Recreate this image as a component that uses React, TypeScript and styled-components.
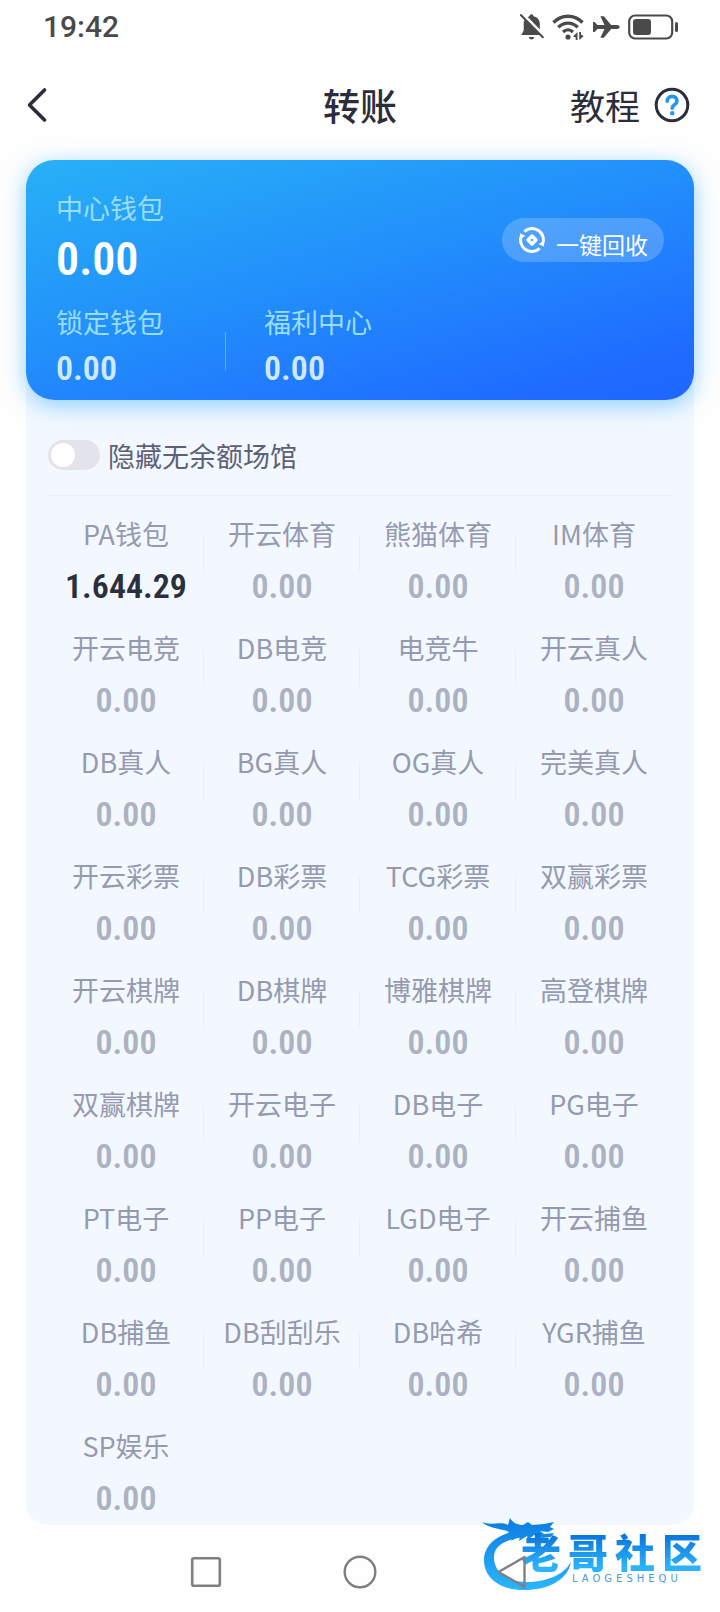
import React, { useState } from "react";
import styled, { createGlobalStyle } from "styled-components";

const GlobalStyle = createGlobalStyle`
  *, *::before, *::after { box-sizing: border-box; }
  body {
    margin: 0;
    background: #fefefe;
    color: #2b2d3a;
    font-family: "Noto Sans CJK SC", sans-serif;
  }
  button { border: 0; padding: 0; background: none; font: inherit; color: inherit; cursor: pointer; }
  ul { list-style: none; margin: 0; padding: 0; }
  svg { display: block; flex: none; }
`;

const numberFont = `"Roboto Condensed", "Liberation Sans Narrow", Roboto, sans-serif`;

const Page = styled.div`
  position: relative;
  min-height: 100vh;
  display: flex;
  flex-direction: column;
`;

const StatusBar = styled.div`
  display: flex;
  align-items: center;
  justify-content: space-between;
  height: 54px;
  padding: 0 41px 0 43px;
  color: #4a4a4a;
`;

const Clock = styled.time`
  font: 500 30px/36px Roboto, sans-serif;
`;

const StatusIcons = styled.div`
  display: flex;
  align-items: center;
  gap: 8px;
`;

const Header = styled.header`
  display: grid;
  grid-template-columns: 1fr auto 1fr;
  align-items: center;
  height: 106px;
  padding: 0 30px 4px;
`;

const Title = styled.h1`
  margin: 0;
  font-size: 37px;
  line-height: 48px;
  font-weight: 500;
`;

const BackButton = styled.button`
  justify-self: start;
  margin-left: -4px;
`;

const HelpLink = styled.a`
  justify-self: end;
  display: flex;
  align-items: center;
  gap: 14px;
  color: inherit;
  text-decoration: none;
  font-size: 35px;
  line-height: 48px;
`;

const Main = styled.main`
  margin: 0 26px;
  border-radius: 28px 28px 22px 22px;
  background: #f2f8fe;
`;

const Card = styled.section`
  display: flex;
  flex-direction: column;
  padding: 30px 30px 12px;
  border-radius: 28px;
  color: #fff;
  background: linear-gradient(164deg, #28b1f6 0%, #2290fb 45%, #1f6bff 88%, #1f66ff 100%);
  box-shadow: 0 5px 22px rgba(40, 165, 255, 0.5);
`;

const CardTop = styled.div`
  display: flex;
  align-items: center;
  justify-content: space-between;
`;

const CardBottom = styled.div`
  display: flex;
  align-items: flex-end;
  gap: 38px;
  margin-top: 14px;
`;

const Wallet = styled.div<{ $wide?: boolean }>`
  min-width: ${(p) => (p.$wide ? "131px" : "0")};
`;

const WalletLabel = styled.div`
  font-size: 27px;
  line-height: 36px;
  color: #9adcfc;
`;

const WalletValue = styled.div<{ $large?: boolean }>`
  margin-top: ${(p) => (p.$large ? "2px" : "8px")};
  font: ${(p) => (p.$large ? "600 46px/62px" : "600 34px/40px")} ${numberFont};
  color: ${(p) => (p.$large ? "#fff" : "#cfe9ff")};
`;

const CardDivider = styled.div`
  width: 1px;
  height: 38px;
  margin-bottom: 18px;
  background: rgba(255, 255, 255, 0.3);
`;

const RecycleButton = styled.button`
  display: flex;
  align-items: center;
  gap: 10px;
  height: 44px;
  padding: 0 16px;
  border-radius: 22px;
  background: rgba(255, 255, 255, 0.2);
  font-size: 23px;
`;

const RecycleText = styled.span`
  padding-top: 8px;
  line-height: 32px;
`;

const Venues = styled.section`
  padding: 15px 22px 3px;
`;

const FilterRow = styled.label`
  display: flex;
  align-items: center;
  gap: 8px;
  height: 81px;
  border-bottom: 1px solid #ebeff5;
  font-size: 27px;
  color: #5d6077;
`;

const Switch = styled.input`
  appearance: none;
  width: 52px;
  height: 30px;
  margin: 0;
  padding: 3px;
  border-radius: 15px;
  background: #e3e4eb;

  &::before {
    content: "";
    display: block;
    width: 24px;
    height: 24px;
    border-radius: 50%;
    background: #fff;
  }

  &:checked {
    background: #2290fb;
  }

  &:checked::before {
    margin-left: auto;
  }
`;

const VenueGrid = styled.ul`
  display: grid;
  grid-template-columns: repeat(4, 1fr);
`;

const Venue = styled.li<{ $divided: boolean }>`
  padding: 20px 0 4px;
  text-align: center;
  background: ${(p) =>
    p.$divided ? "linear-gradient(#eceef9, #eceef9) right 39px / 1px 37px no-repeat" : "none"};
`;

const VenueName = styled.div`
  font-size: 27px;
  line-height: 36px;
  white-space: nowrap;
  color: #969ab0;
`;

const VenueBalance = styled.div<{ $funded: boolean }>`
  margin-top: 14px;
  font: 600 34px/40px ${numberFont};
  color: ${(p) => (p.$funded ? "#2b2f3b" : "#adb2c3")};
`;

const NavBar = styled.nav`
  position: relative;
  z-index: 1;
  display: flex;
  align-items: center;
  justify-content: center;
  gap: 120px;
  height: 87px;
  padding-top: 7px;
`;

const Watermark = styled.div`
  position: absolute;
  right: 14px;
  bottom: 20px;
  width: 226px;
  height: 76px;
  padding: 14px 0 0 41px;
  pointer-events: none;
`;

const Dragon = styled.svg`
  position: absolute;
  left: 0;
  top: 0;
`;

const BrandName = styled.div`
  position: relative;
  display: flex;
  gap: 7px;
  font-size: 40px;
  line-height: 42px;
  font-weight: 900;
  color: transparent;
  background: linear-gradient(#0c78dc 15%, #2bb4fc 90%);
  background-clip: text;
  -webkit-background-clip: text;
`;

const BrandLatin = styled.div`
  padding-left: 51px;
  font: 10px/14px "DejaVu Sans", sans-serif;
  letter-spacing: 4px;
  color: #4a9ad8;
`;

const venueNames = [
  "PA钱包", "开云体育", "熊猫体育", "IM体育",
  "开云电竞", "DB电竞", "电竞牛", "开云真人",
  "DB真人", "BG真人", "OG真人", "完美真人",
  "开云彩票", "DB彩票", "TCG彩票", "双赢彩票",
  "开云棋牌", "DB棋牌", "博雅棋牌", "高登棋牌",
  "双赢棋牌", "开云电子", "DB电子", "PG电子",
  "PT电子", "PP电子", "LGD电子", "开云捕鱼",
  "DB捕鱼", "DB刮刮乐", "DB哈希", "YGR捕鱼",
  "SP娱乐",
];

const venues = venueNames.map((name) => ({
  name,
  balance: name === "PA钱包" ? "1.644.29" : "0.00",
}));

const MutedBell = () => (
  <svg width="24" height="28" viewBox="0 0 24 28" fill="currentColor">
    <path d="M9.500 3.200a2 2 0 0 1 4 0c4 .9 6.300 3.800 6.300 7.800v6.500l2.200 4.500H1.200l2.500-4.500V11c0-4 2-6.900 5.800-7.800z" />
    <path d="M8.700 24h5.600c-.4 1.600-1.400 2.400-2.800 2.400S9.100 25.600 8.700 24z" />
    <path d="M2.500 1.500 24 23.500" stroke="#fefefe" strokeWidth="4" />
    <path d="M.8 2 22.800 24.300" stroke="currentColor" strokeWidth="2" strokeLinecap="round" />
  </svg>
);

const Wifi = () => (
  <svg width="32" height="28" viewBox="0 0 32 28" fill="none" stroke="currentColor">
    <path d="M1.500 9.500C9.500 1.200 22.500 1.200 30.500 9.500" strokeWidth="3.400" />
    <path d="M6.300 14.300c5.500-5.600 13.900-5.600 19.400 0" strokeWidth="3.400" />
    <path d="M11 19c3-2.900 7-2.900 10 0" strokeWidth="3.200" />
    <circle cx="16" cy="24" r="2.600" fill="currentColor" stroke="none" />
    <path d="M25.500 19v8h-1.800v-2.400L21 23.500zM27.200 27v-8H29v2.400l2.700 1.600z" fill="currentColor" stroke="none" />
  </svg>
);

const Plane = () => (
  <svg width="28" height="24" viewBox="0 0 28 24" fill="currentColor">
    <path d="M1 7h1.500l3 3h7L8.400 1.200h3.400l7.400 8.800h5.600c1.800 0 2.900.8 2.900 2s-1.100 2-2.900 2h-5.600l-7.400 8.800H8.400L12.500 14h-7l-3 3H1V7z" />
  </svg>
);

const Battery = () => (
  <svg width="51" height="26" viewBox="0 0 51 26" fill="none">
    <rect x="1.200" y="1.500" width="43" height="23" rx="6" stroke="currentColor" strokeWidth="2.200" />
    <rect x="5" y="5" width="18" height="16" rx="3" fill="currentColor" />
    <path d="M48.500 9.500v7" stroke="currentColor" strokeWidth="3" strokeLinecap="round" />
  </svg>
);

const ChevronLeft = () => (
  <svg width="22" height="36" viewBox="0 0 22 36" fill="none">
    <path d="M18.500 3 3.500 18l15 15" stroke="#2b2d3a" strokeWidth="3.600" strokeLinecap="round" strokeLinejoin="round" />
  </svg>
);

const HelpIcon = () => (
  <svg width="36" height="36" viewBox="0 0 36 36" fill="none">
    <circle cx="18" cy="18" r="15.800" stroke="#2b2d3a" strokeWidth="3" />
    <path d="M13.200 14.300c0-3 2-4.900 4.900-4.900s4.900 1.800 4.900 4.500c0 3.600-4.800 3.800-4.800 7.300" stroke="#2196f3" strokeWidth="3.600" strokeLinecap="round" />
    <circle cx="18.200" cy="26.300" r="2.200" fill="#2196f3" />
  </svg>
);

const RecycleIcon = () => (
  <svg width="28" height="28" viewBox="0 0 28 28" fill="none" stroke="#fff">
    <path d="M6.300 5.600A11.400 11.400 0 0 1 24.300 19" strokeWidth="3" />
    <path d="M21.700 22.400A11.400 11.400 0 0 1 3.700 9" strokeWidth="3" />
    <path d="M26.200 20.800 20.500 18l5-2.500zM1.800 7.200 7.500 10l-5 2.500z" fill="#fff" stroke="none" />
    <path d="m14 10 4 4-4 4-4-4z" strokeWidth="3.400" strokeLinejoin="round" />
  </svg>
);

const DragonMark = () => (
  <Dragon width="94" height="76" viewBox="0 0 94 76" aria-hidden="true">
    <defs>
      <linearGradient id="dragonBlue" x1="0" y1="0" x2="0" y2="76" gradientUnits="userSpaceOnUse">
        <stop offset="0.100" stopColor="#0f80e2" />
        <stop offset="1" stopColor="#2bb8ff" />
      </linearGradient>
    </defs>
    <g fill="url(#dragonBlue)">
      <path d="M42 15C18 16 4 29 4 44c0 18 16 30 40 30 24 0 44-10 47-28-7 13-25 20-44 20-20 0-32-10-33-23-1-12 9-20 32-22z" />
      <path d="M2 6c9 4 18-1 26 3l2-7c3 5 8 7 13 7l5-3 4 3 12-1 10-2-4 5 4 2-6 3-8-1 4 3 10-1-3 4-9 1-8-3-6 5-1-4-8 5 1-5-9 5 3-6-10 2 5-5C21 12 9 13 2 6z" />
    </g>
  </Dragon>
);

export default function App() {
  const [hideEmpty, setHideEmpty] = useState(false);
  const shown = hideEmpty ? venues.filter((v) => v.balance !== "0.00") : venues;

  return (
    <Page>
      <GlobalStyle />
      <StatusBar>
        <Clock>19:42</Clock>
        <StatusIcons>
          <MutedBell />
          <Wifi />
          <Plane />
          <Battery />
        </StatusIcons>
      </StatusBar>

      <Header>
        <BackButton aria-label="返回"><ChevronLeft /></BackButton>
        <Title>转账</Title>
        <HelpLink href="#help">教程<HelpIcon /></HelpLink>
      </Header>

      <Main>
        <Card>
          <CardTop>
            <Wallet>
              <WalletLabel>中心钱包</WalletLabel>
              <WalletValue $large>0.00</WalletValue>
            </Wallet>
            <RecycleButton>
              <RecycleIcon />
              <RecycleText>一键回收</RecycleText>
            </RecycleButton>
          </CardTop>
          <CardBottom>
            <Wallet $wide>
              <WalletLabel>锁定钱包</WalletLabel>
              <WalletValue>0.00</WalletValue>
            </Wallet>
            <CardDivider />
            <Wallet>
              <WalletLabel>福利中心</WalletLabel>
              <WalletValue>0.00</WalletValue>
            </Wallet>
          </CardBottom>
        </Card>

        <Venues>
          <FilterRow>
            <Switch
              type="checkbox"
              role="switch"
              checked={hideEmpty}
              onChange={(e) => setHideEmpty(e.target.checked)}
            />
            隐藏无余额场馆
          </FilterRow>
          <VenueGrid>
            {shown.map((v, i) => (
              <Venue key={v.name} $divided={i % 4 !== 3 && i < shown.length - 1}>
                <VenueName>{v.name}</VenueName>
                <VenueBalance $funded={v.balance !== "0.00"}>{v.balance}</VenueBalance>
              </Venue>
            ))}
          </VenueGrid>
        </Venues>
      </Main>

      <NavBar>
        <button aria-label="最近任务">
          <svg width="34" height="34" viewBox="0 0 34 34" fill="none">
            <rect x="3.200" y="3.200" width="27.600" height="27.600" rx="1.500" stroke="#808080" strokeWidth="2.600" />
          </svg>
        </button>
        <button aria-label="主页">
          <svg width="34" height="34" viewBox="0 0 34 34" fill="none">
            <circle cx="17" cy="17" r="15.300" stroke="#808080" strokeWidth="2.400" />
          </svg>
        </button>
        <button aria-label="后退">
          <svg width="34" height="34" viewBox="0 0 34 34" fill="none">
            <path d="M27.500 2v30L1.500 17z" stroke="#808080" strokeWidth="2.400" strokeLinejoin="round" />
          </svg>
        </button>
      </NavBar>

      <Watermark>
        <DragonMark />
        <BrandName>
          {[..."老哥社区"].map((char) => (
            <span key={char}>{char}</span>
          ))}
        </BrandName>
        <BrandLatin>LAOGESHEQU</BrandLatin>
      </Watermark>
    </Page>
  );
}
